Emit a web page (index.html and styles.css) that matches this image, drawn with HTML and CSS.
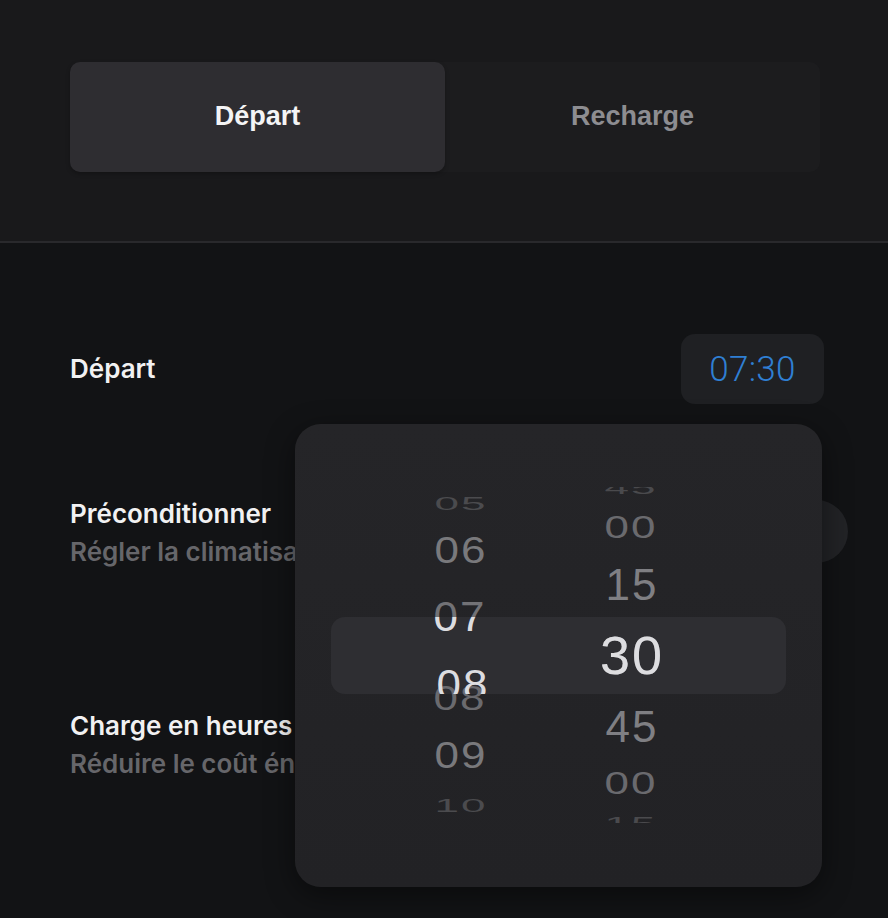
FILE: index.html
```html
<!DOCTYPE html>
<html lang="fr">
<head>
<meta charset="utf-8">
<title>Départ</title>
<link rel="stylesheet" href="styles.css">
</head>
<body>
<div class="app">
  <header class="top">
    <div class="seg">
      <div class="tab tab-active">Départ</div>
      <div class="tab">Recharge</div>
    </div>
  </header>
  <main class="list">
    <div class="row row-depart">
      <div class="title">Départ</div>
      <div class="time">07:30</div>
    </div>
    <div class="row row-pre">
      <div class="text">
        <div class="title">Préconditionner</div>
        <div class="sub">Régler la climatisation avant le départ</div>
      </div>
      <div class="toggle"></div>
    </div>
    <div class="row row-charge">
      <div class="text">
        <div class="title">Charge en heures creuses</div>
        <div class="sub">Réduire le coût énergétique</div>
      </div>
    </div>

    <div class="picker">
      <div class="band"></div>
      <div class="drum">
        <span class="num h05">05</span>
        <span class="num h06">06</span>
        <span class="num h07">07</span>
        <span class="num h08g">08</span>
        <span class="num h09">09</span>
        <span class="num h10">10</span>
        <span class="num m45t">45</span>
        <span class="num m00t">00</span>
        <span class="num m15">15</span>
        <span class="num m30d">30</span>
        <span class="num m45">45</span>
        <span class="num m00b">00</span>
        <span class="num m15b">15</span>
      </div>
      <div class="lens">
        <div class="lens-inner">
          <span class="num bright h07">07</span>
          <span class="num bright h08">08</span>
          <span class="num bright m30">30</span>
        </div>
      </div>
    </div>
  </main>
</div>
</body>
</html>
```

FILE: styles.css
```css
* { box-sizing: border-box; }
html, body { margin: 0; padding: 0; }
body {
  background: #121315;
  font-family: "Inter", "Liberation Sans", sans-serif;
  color: #f2f2f3;
  width: 888px;
  height: 918px;
  overflow: hidden;
}
.app { position: relative; width: 888px; height: 918px; }

.top {
  height: 243px;
  background: #19191b;
  padding: 62px 68px 0 70px;
  border-bottom: 2px solid #29292c;
}
.seg {
  display: flex;
  height: 110px;
  background: #1c1c1e;
  border-radius: 10px;
}
.tab {
  flex: 1;
  display: flex;
  align-items: center;
  justify-content: center;
  font-family: "Liberation Sans", Arial, sans-serif;
  font-weight: 700;
  font-size: 27px;
  color: #8d8d91;
  padding-bottom: 2px;
}
.tab-active {
  background: #2e2d31;
  color: #f4f4f5;
  border-radius: 10px;
  box-shadow: 0 2px 4px rgba(0,0,0,0.25);
}

.list {
  position: relative;
  padding: 91px 64px 0 70px;
}
.row {
  display: flex;
  align-items: center;
  justify-content: space-between;
}
.row-depart { height: 70px; }
.row-pre { margin-top: 95px; height: 68px; }
.row-charge { margin-top: 144px; height: 68px; }
.text { display: flex; flex-direction: column; gap: 8px; }
.title {
  font-size: 26px;
  line-height: 30px;
  font-weight: 600;
  color: #f1f1f2;
  white-space: nowrap;
}
.sub {
  font-size: 26px;
  line-height: 30px;
  font-weight: 600;
  color: #66666a;
  white-space: nowrap;
}
.time {
  width: 143px;
  height: 70px;
  border-radius: 14px;
  background: #1f2023;
  display: flex;
  align-items: center;
  justify-content: center;
  font-family: "Roboto", "Liberation Sans", sans-serif;
  font-weight: 300;
  font-size: 35px;
  color: #2f7fd3;
  letter-spacing: 0.3px;
}
.toggle {
  width: 110px;
  height: 63px;
  border-radius: 32px;
  background: #222326;
  margin-right: -24px;
  margin-top: -4px;
}

/* time picker (floating over the list) */
.picker {
  position: absolute;
  left: 295px;
  top: 181px;
  width: 527px;
  height: 463px;
  border-radius: 26px;
  background: linear-gradient(#252528, #222225);
  box-shadow: 0 8px 30px rgba(0,0,0,0.45);
}
.band {
  position: absolute;
  left: 36px;
  top: 193px;
  width: 455px;
  height: 77px;
  border-radius: 14px;
  background: #2e2e32;
}
.drum {
  position: absolute;
  left: 0;
  top: 63px;
  width: 527px;
  height: 336px;
  overflow: hidden;
}
.lens {
  position: absolute;
  left: 36px;
  top: 193px;
  width: 455px;
  height: 77px;
  overflow: hidden;
}
.lens-inner {
  position: absolute;
  left: -36px;
  top: -130px;
  width: 527px;
  height: 336px;
}
.num {
  position: absolute;
  font-family: "Liberation Sans", Arial, sans-serif;
  font-size: 44px;
  line-height: 44px;
  letter-spacing: 2px;
  color: #7a7a7d;
  white-space: nowrap;
  transform: translate(-50%, -50%);
}
/* hours column, centre x = 165 */
.h05 { left: 166px; top: 17px; color: #4b4b4e; transform: translate(-50%, -50%) scaleY(0.4); }
.h06 { left: 166px; top: 63px; color: #79797c; transform: translate(-50%, -50%) scaleY(0.85); }
.h07 { left: 165px; top: 130px; color: #727276; transform: translate(-50%, -50%) scaleY(0.95); }
.h08g { left: 165px; top: 211px; color: #6a6a6e; transform: translate(-50%, -50%) scaleY(0.8); }
.h09 { left: 166px; top: 268px; color: #79797c; transform: translate(-50%, -50%) scaleY(0.85); }
.h10 { left: 166px; top: 319px; color: #4b4b4e; transform: translate(-50%, -50%) scaleY(0.4); }
.h08 { left: 168px; top: 198px; transform: translate(-50%, -50%) scaleY(0.95); }
/* minutes column, centre x = 335 */
.m45t { left: 336px; top: 1px; color: #4a4a4d; transform: translate(-50%, -50%) scaleY(0.4); }
.m00t { left: 336px; top: 40px; color: #6a6a6e; transform: translate(-50%, -50%) scaleY(0.7); }
.m15 { left: 337px; top: 98px; color: #7f7f83; }
.m30d { left: 337px; top: 168px; color: #7f7f83; font-size: 54px; line-height: 54px; }
.m45 { left: 337px; top: 240px; color: #7f7f83; }
.m00b { left: 336px; top: 297px; color: #6a6a6e; transform: translate(-50%, -50%) scaleY(0.7); }
.m15b { left: 336px; top: 337px; color: #4a4a4d; transform: translate(-50%, -50%) scaleY(0.4); }
.m30 { left: 337px; top: 168px; font-size: 54px; line-height: 54px; }
.bright { color: #dddde0; }
```
